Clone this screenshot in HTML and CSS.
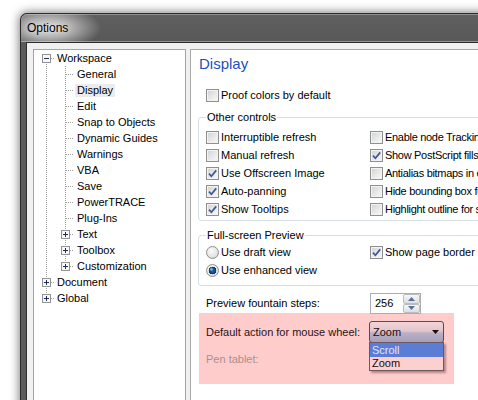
FILE: index.html
```html
<!DOCTYPE html>
<html>
<head>
<meta charset="utf-8">
<title>Options</title>
<link rel="stylesheet" href="styles.css">
</head>
<body>
<div class="desk">
  <div class="window">
    <div class="titlebar"><span class="title">Options</span></div>
    <div class="client">
      <div class="tree">
        <div class="trow"><span class="g0 g0-first"><svg class="tb" width="9" height="9" viewBox="0 0 9 9"><rect x=".5" y=".5" width="8" height="8" fill="#f7f7f7" stroke="#939393"/><path d="M2 4.5h5" stroke="#1f2f4f"/></svg></span><span class="tl">Workspace</span></div>
        <div class="trow"><span class="g0 g0-pass"></span><span class="g1 g1-leaf"></span><span class="tl">General</span></div>
        <div class="trow"><span class="g0 g0-pass"></span><span class="g1 g1-leaf"></span><span class="tl sel">Display</span></div>
        <div class="trow"><span class="g0 g0-pass"></span><span class="g1 g1-leaf"></span><span class="tl">Edit</span></div>
        <div class="trow"><span class="g0 g0-pass"></span><span class="g1 g1-leaf"></span><span class="tl">Snap to Objects</span></div>
        <div class="trow"><span class="g0 g0-pass"></span><span class="g1 g1-leaf"></span><span class="tl">Dynamic Guides</span></div>
        <div class="trow"><span class="g0 g0-pass"></span><span class="g1 g1-leaf"></span><span class="tl">Warnings</span></div>
        <div class="trow"><span class="g0 g0-pass"></span><span class="g1 g1-leaf"></span><span class="tl">VBA</span></div>
        <div class="trow"><span class="g0 g0-pass"></span><span class="g1 g1-leaf"></span><span class="tl">Save</span></div>
        <div class="trow"><span class="g0 g0-pass"></span><span class="g1 g1-leaf"></span><span class="tl">PowerTRACE</span></div>
        <div class="trow"><span class="g0 g0-pass"></span><span class="g1 g1-leaf"></span><span class="tl">Plug-Ins</span></div>
        <div class="trow"><span class="g0 g0-pass"></span><span class="g1 g1-box"><svg class="tb" width="9" height="9" viewBox="0 0 9 9"><rect x=".5" y=".5" width="8" height="8" fill="#f7f7f7" stroke="#939393"/><path d="M2 4.5h5M4.5 2v5" stroke="#1f2f4f"/></svg></span><span class="tl">Text</span></div>
        <div class="trow"><span class="g0 g0-pass"></span><span class="g1 g1-box"><svg class="tb" width="9" height="9" viewBox="0 0 9 9"><rect x=".5" y=".5" width="8" height="8" fill="#f7f7f7" stroke="#939393"/><path d="M2 4.5h5M4.5 2v5" stroke="#1f2f4f"/></svg></span><span class="tl">Toolbox</span></div>
        <div class="trow"><span class="g0 g0-pass"></span><span class="g1 g1-lastbox"><svg class="tb" width="9" height="9" viewBox="0 0 9 9"><rect x=".5" y=".5" width="8" height="8" fill="#f7f7f7" stroke="#939393"/><path d="M2 4.5h5M4.5 2v5" stroke="#1f2f4f"/></svg></span><span class="tl">Customization</span></div>
        <div class="trow"><span class="g0 g0-mid"><svg class="tb" width="9" height="9" viewBox="0 0 9 9"><rect x=".5" y=".5" width="8" height="8" fill="#f7f7f7" stroke="#939393"/><path d="M2 4.5h5M4.5 2v5" stroke="#1f2f4f"/></svg></span><span class="tl">Document</span></div>
        <div class="trow"><span class="g0 g0-last"><svg class="tb" width="9" height="9" viewBox="0 0 9 9"><rect x=".5" y=".5" width="8" height="8" fill="#f7f7f7" stroke="#939393"/><path d="M2 4.5h5M4.5 2v5" stroke="#1f2f4f"/></svg></span><span class="tl">Global</span></div>
      </div>

      <div class="page">
        <div class="heading">Display</div>
        <div class="row proof"><span class="cb"></span><span>Proof colors by default</span></div>

        <fieldset class="grp grp-other">
          <legend>Other controls</legend>
          <div class="grid">
            <div class="row"><span class="cb"></span><span>Interruptible refresh</span></div>
            <div class="row narrow"><span class="cb"></span><span>Enable node Tracking</span></div>
            <div class="row"><span class="cb"></span><span>Manual refresh</span></div>
            <div class="row narrow"><span class="cb on"><svg width="11" height="11" viewBox="0 0 11 11"><path d="M2 5.6l2.4 2.7L9.2 2.4" fill="none" stroke="#3d5896" stroke-width="1.7"/></svg></span><span>Show PostScript fills in enhanced view</span></div>
            <div class="row"><span class="cb on"><svg width="11" height="11" viewBox="0 0 11 11"><path d="M2 5.6l2.4 2.7L9.2 2.4" fill="none" stroke="#3d5896" stroke-width="1.7"/></svg></span><span>Use Offscreen Image</span></div>
            <div class="row narrow"><span class="cb"></span><span>Antialias bitmaps in enhanced view</span></div>
            <div class="row"><span class="cb on"><svg width="11" height="11" viewBox="0 0 11 11"><path d="M2 5.6l2.4 2.7L9.2 2.4" fill="none" stroke="#3d5896" stroke-width="1.7"/></svg></span><span>Auto-panning</span></div>
            <div class="row narrow"><span class="cb"></span><span>Hide bounding box for selected objects</span></div>
            <div class="row"><span class="cb on"><svg width="11" height="11" viewBox="0 0 11 11"><path d="M2 5.6l2.4 2.7L9.2 2.4" fill="none" stroke="#3d5896" stroke-width="1.7"/></svg></span><span>Show Tooltips</span></div>
            <div class="row narrow"><span class="cb"></span><span>Highlight outline for selected objects</span></div>
          </div>
        </fieldset>

        <fieldset class="grp grp-full">
          <legend>Full-screen Preview</legend>
          <div class="grid">
            <div class="row"><span class="rb"></span><span>Use draft view</span></div>
            <div class="row"><span class="cb on"><svg width="11" height="11" viewBox="0 0 11 11"><path d="M2 5.6l2.4 2.7L9.2 2.4" fill="none" stroke="#3d5896" stroke-width="1.7"/></svg></span><span>Show page border</span></div>
            <div class="row"><span class="rb on"></span><span>Use enhanced view</span></div>
          </div>
        </fieldset>

        <div class="fount">
          <span class="flabel">Preview fountain steps:</span>
          <div class="spin">
            <span class="val">256</span>
            <span class="btns">
              <span class="sbtn"><svg width="7" height="4" viewBox="0 0 7 4"><path d="M0 4L3.5 0L7 4z" fill="#58709f"/></svg></span>
              <span class="sbtn"><svg width="7" height="4" viewBox="0 0 7 4"><path d="M0 0L3.5 4L7 0z" fill="#58709f"/></svg></span>
            </span>
          </div>
        </div>

        <div class="hl">
          <div class="hl-row">
            <span>Default action for mouse wheel:</span>
            <div class="combo">
              <span>Zoom</span>
              <svg class="carrow" width="7" height="4" viewBox="0 0 7 4"><path d="M0 0h7L3.5 4z" fill="#1e0c0c"/></svg>
              <div class="list">
                <div class="li sel">Scroll</div>
                <div class="li">Zoom</div>
              </div>
            </div>
          </div>
          <div class="pen">Pen tablet:</div>
        </div>
      </div>
    </div>
  </div>
</div>
</body>
</html>
```
FILE: styles.css
```css
* { box-sizing: border-box; }

body {
  margin: 0;
  width: 478px;
  height: 400px;
  overflow: hidden;
  background: #fff;
  font-family: "Liberation Sans", Arial, sans-serif;
  font-size: 11px;
  color: #000;
}

.desk {
  padding: 13px 0 0 20px;
}

.window {
  width: 520px;
  height: 420px;
  display: flex;
  flex-direction: column;
  background: #5a5a5a;
  border: 1px solid #2c2c2c;
  border-right: none;
  border-bottom: none;
  border-radius: 7px 0 0 0;
  box-shadow: 0 0 10px 1px rgba(0, 0, 0, .5);
}

.titlebar {
  height: 28px;
  flex: none;
  padding-left: 6px;
  line-height: 28px;
  font-size: 12px;
  border-radius: 6px 0 0 0;
  background:
    radial-gradient(ellipse 52px 22px at 28px 14px, rgba(226, 226, 226, .95) 0%, rgba(210, 210, 210, .7) 45%, rgba(200, 200, 200, 0) 100%),
    linear-gradient(#606060, #585858);
  box-shadow: inset 0 1px rgba(255, 255, 255, .3), inset 0 -1px rgba(255, 255, 255, .35);
}

.title {
  color: #000;
  text-shadow: 0 0 6px rgba(255, 255, 255, .9);
}

.client {
  flex: 1;
  margin-left: 5px;
  background: #f0f0f0;
  border-top: 1px solid #2c2c2c;
  border-left: 1px solid #2c2c2c;
  display: flex;
  gap: 4px;
  padding: 6px 0 0 6px;
}

/* ---------- tree ---------- */
.tree {
  --dv: repeating-linear-gradient(to bottom, #a0a0a0 0 1px, transparent 1px 2px);
  --dh: repeating-linear-gradient(to right, #a0a0a0 0 1px, transparent 1px 2px);
  width: 153px;
  flex: none;
  background: #fff;
  border: 1px solid #a3a3a3;
}

.trow {
  display: flex;
  align-items: center;
  height: 16px;
}

.g0, .g1 {
  flex: none;
  align-self: stretch;
  height: 16px;
  background-repeat: no-repeat;
}
.g0 { width: 21px; }
.g1 { width: 20px; }

.g0 .tb { display: block; margin: 4px 0 0 8px; }
.g1 .tb { display: block; margin: 4px 0 0 6px; }

.g0-first {
  background-image: var(--dh), var(--dv);
  background-position: 17px 8px, 12px 14px;
  background-size: 4px 1px, 1px 2px;
}
.g0-pass {
  background-image: var(--dv);
  background-position: 12px 0;
  background-size: 1px 16px;
}
.g0-mid {
  background-image: var(--dh), var(--dv);
  background-position: 17px 8px, 12px 0;
  background-size: 4px 1px, 1px 16px;
}
.g0-last {
  background-image: var(--dh), var(--dv);
  background-position: 17px 8px, 12px 0;
  background-size: 4px 1px, 1px 4px;
}
.g1-leaf {
  background-image: var(--dh), var(--dv);
  background-position: 11px 8px, 10px 0;
  background-size: 8px 1px, 1px 16px;
}
.g1-box {
  background-image: var(--dh), var(--dv);
  background-position: 15px 8px, 10px 0;
  background-size: 4px 1px, 1px 16px;
}
.g1-lastbox {
  background-image: var(--dh), var(--dv);
  background-position: 15px 8px, 10px 0;
  background-size: 4px 1px, 1px 4px;
}

.tl {
  padding: 0 2px;
  line-height: 16px;
  white-space: nowrap;
}
.tl.sel {
  background: #ececec;
  line-height: 13px;
}

/* ---------- page ---------- */
.page {
  flex: 1;
  background: #fff;
  border: 1px solid #a8a8a8;
  border-right: none;
  border-bottom: none;
  padding: 4px 0 0 7px;
}

.heading {
  font-size: 15px;
  line-height: 20px;
  color: #1c4fc3;
  margin-left: 1px;
}

.row {
  display: flex;
  align-items: center;
  gap: 2px;
  height: 18px;
  white-space: nowrap;
}
.row.narrow { letter-spacing: -0.3px; }

.proof { margin: 12px 0 0 8px; }

.cb {
  flex: none;
  width: 13px;
  height: 13px;
  border: 1px solid #8e8f8f;
  background: linear-gradient(135deg, #cfd1d4 0%, #e8e9ea 55%, #f8f8f8 100%);
  box-shadow: inset 0 0 0 1px #f3f3f3;
}
.cb svg { display: block; }

.rb {
  flex: none;
  width: 13px;
  height: 13px;
  border: 1px solid #8e8f8f;
  border-radius: 50%;
  background: radial-gradient(circle at 40% 35%, #fbfbfb 0%, #e6e6e6 55%, #cfcfcf 100%);
}
.rb.on {
  background:
    radial-gradient(circle at 4.4px 4.2px, rgba(150, 225, 250, .95) 0, rgba(120, 200, 240, 0) 2.2px),
    radial-gradient(circle at 5.5px 5.5px, #1c6aa5 0, #124a80 2.6px, #0d3460 3.6px, rgba(13, 52, 96, 0) 4.1px),
    radial-gradient(circle at 40% 35%, #fbfbfb 0%, #e6e6e6 55%, #cfcfcf 100%);
}

.grp {
  margin: 6px 0 0;
  padding: 3px 0 2px 7px;
  border: 1px solid #d5dfe5;
  border-radius: 3px;
  min-width: 0;
}
.grp legend {
  padding: 0 1px;
  line-height: 15px;
  font-size: 11px;
}
.grp-full {
  margin-top: 7px;
  padding: 0 0 6px 7px;
}

.grid {
  display: grid;
  grid-template-columns: 164px 1fr;
}

.fount {
  margin: 7px 0 0 8px;
  display: grid;
  grid-template-columns: 164px auto;
  height: 20px;
  align-items: start;
}
.flabel { line-height: 21px; }

.spin {
  width: 51px;
  height: 21px;
  border: 1px solid #abadb3;
  background: #fff;
  display: flex;
}
.spin .val {
  flex: 1;
  padding-left: 4px;
  line-height: 19px;
}
.btns {
  width: 17px;
  display: flex;
  flex-direction: column;
}
.sbtn {
  flex: 1;
  border: 1px solid #bcbcbc;
  border-radius: 2px;
  background: linear-gradient(#f6f6f6, #dedede);
  display: flex;
  align-items: center;
  justify-content: center;
}
.sbtn svg { display: block; }

.hl {
  margin-left: 1px;
  width: 255px;
  height: 71px;
  background: #ffcccc;
  padding: 8px 0 0 7px;
  color: #2d1212;
}
.hl-row {
  display: grid;
  grid-template-columns: 163px 75px;
  align-items: center;
  height: 22px;
}

.combo {
  position: relative;
  height: 22px;
  border: 1px solid #54495e;
  border-radius: 3px;
  background: linear-gradient(#f0d4d8 0%, #e3c6cd 45%, #bab0c5 55%, #a49fba 100%);
  display: flex;
  align-items: center;
  padding-left: 3px;
  color: #1e0c0c;
}
.carrow {
  display: block;
  margin-left: auto;
  margin-right: 4px;
}

.list {
  position: absolute;
  left: -1px;
  top: 20px;
  width: 75px;
  border: 1px solid #6c5860;
  background: #fdd0d0;
  box-shadow: 2px 2px 2px rgba(90, 50, 50, .45);
}
.li {
  height: 13px;
  line-height: 13px;
  padding-left: 2px;
}
.li.sel {
  height: 14px;
  line-height: 14px;
  background: #5b7dd6;
  color: #e4e4f6;
}

.pen {
  margin-top: 7px;
  height: 18px;
  line-height: 18px;
  color: #a99090;
}
```
